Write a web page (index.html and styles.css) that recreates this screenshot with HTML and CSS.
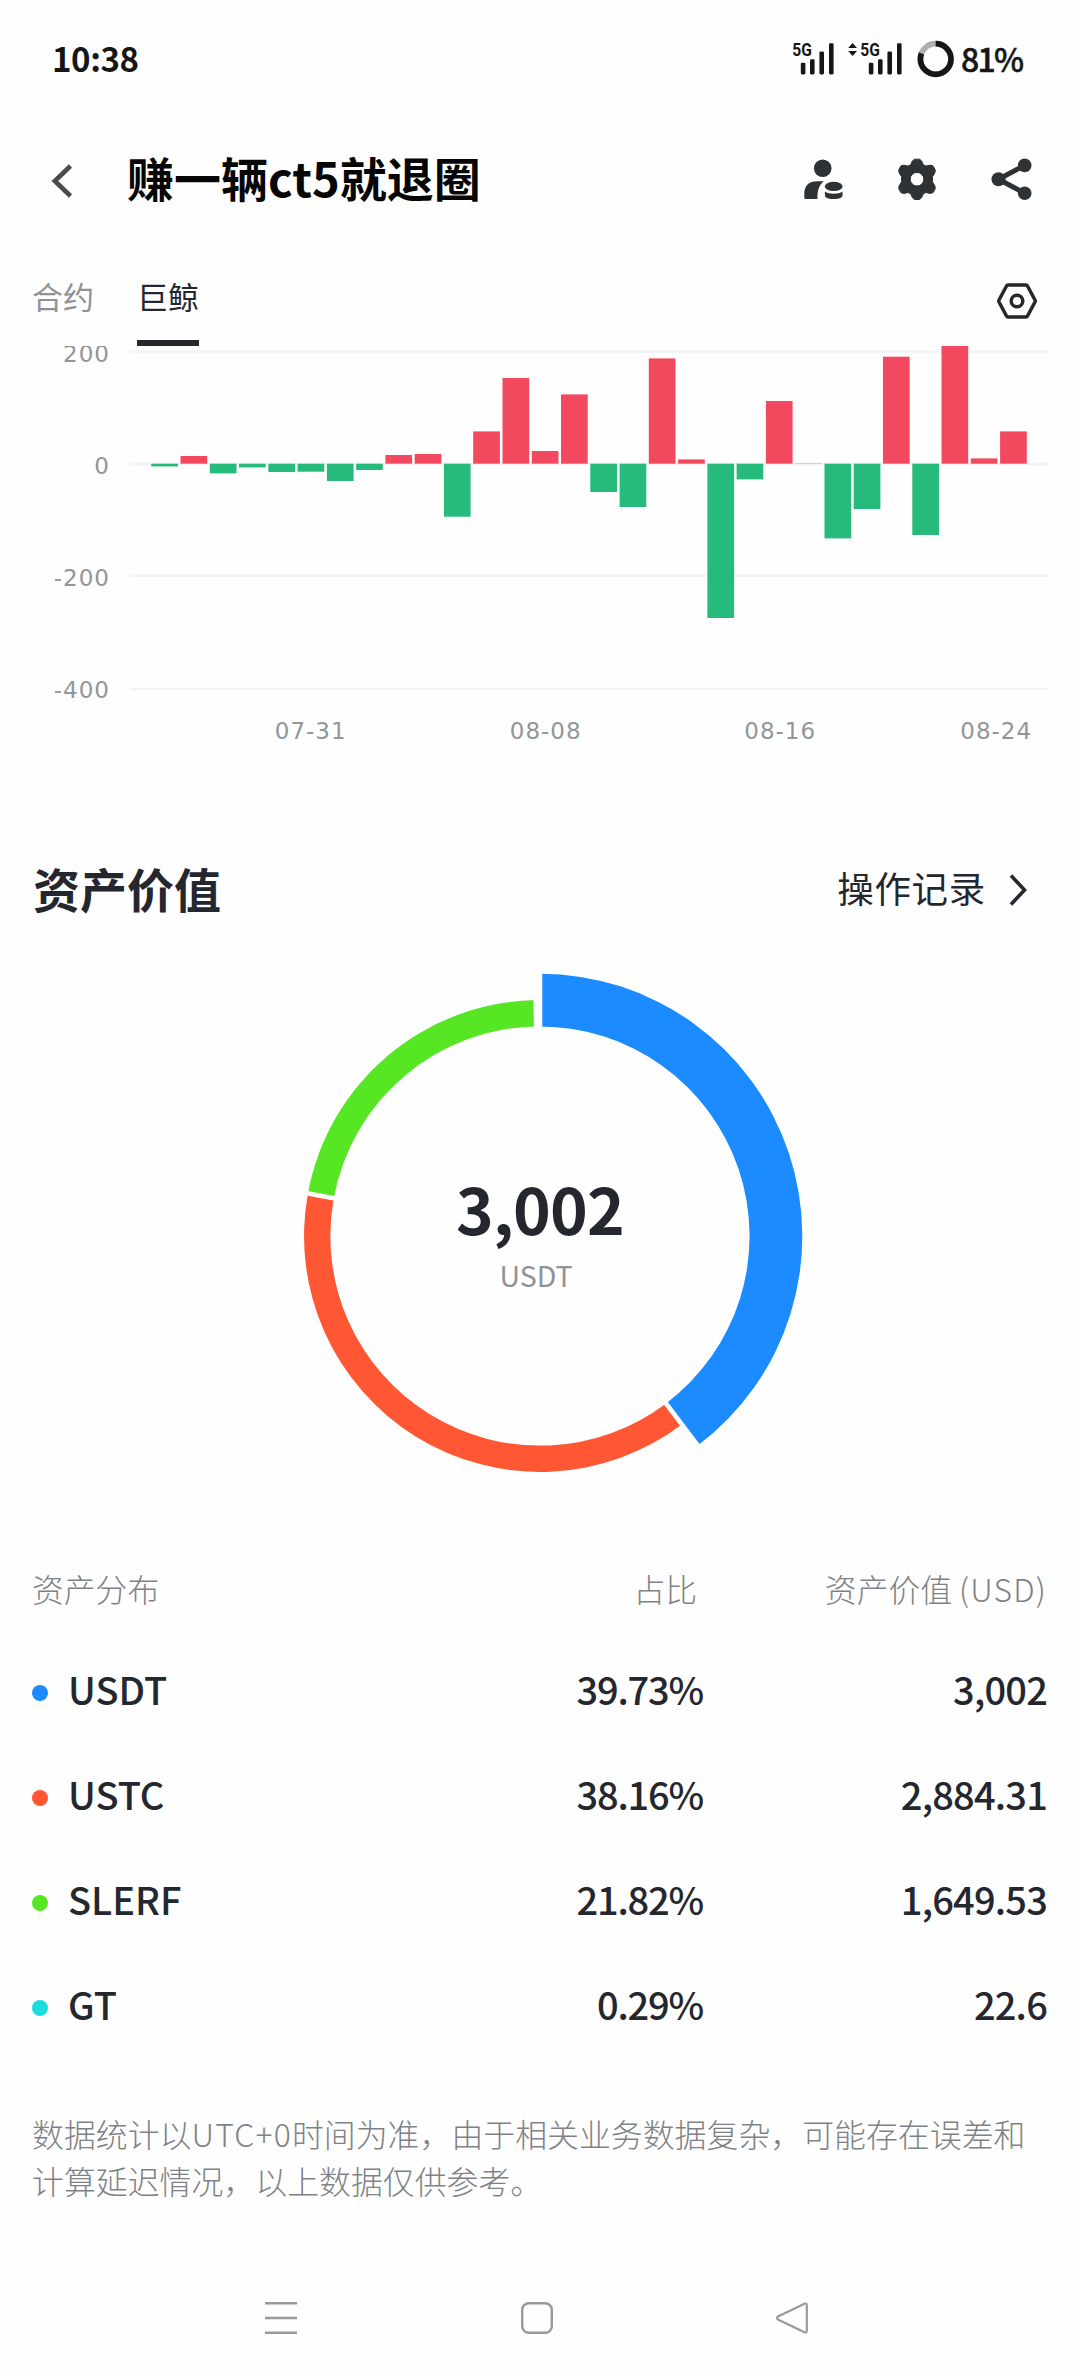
FILE: index.html
```html
<!DOCTYPE html>
<html lang="zh-CN">
<head>
<meta charset="utf-8">
<title>资产价值</title>
<link rel="stylesheet" href="styles.css">
</head>
<body>
<div class="status">
  <span class="time">10:38</span>
  <div class="status-right">
    <svg class="signals" width="166" height="40" viewBox="790 39 166 40">
      <g fill="#161616">
        <text class="net" x="792.3" y="56.4" textLength="19.6" lengthAdjust="spacingAndGlyphs">5G</text>
        <rect x="800.8" y="62.8" width="4.6" height="11.6" rx="1.3"/>
        <rect x="810" y="59.3" width="4.6" height="15.1" rx="1.3"/>
        <rect x="819.4" y="51.5" width="4.6" height="22.9" rx="1.3"/>
        <rect x="829" y="43.3" width="4.6" height="31.1" rx="1.3"/>
      </g>
      <g fill="#161616" transform="translate(68 0)">
        <text class="net" x="792.3" y="56.4" textLength="19.6" lengthAdjust="spacingAndGlyphs">5G</text>
        <rect x="800.8" y="62.8" width="4.6" height="11.6" rx="1.3"/>
        <rect x="810" y="59.3" width="4.6" height="15.1" rx="1.3"/>
        <rect x="819.4" y="51.5" width="4.6" height="22.9" rx="1.3"/>
        <rect x="829" y="43.3" width="4.6" height="31.1" rx="1.3"/>
      </g>
      <path d="M848.2 48 852.6 43l4.4 5zM848.2 51h8.8l-4.4 5z" fill="#161616"/>
      <circle cx="935.7" cy="59" r="15.3" fill="none" stroke="#b0b0b0" stroke-width="5.7"/>
      <circle cx="935.7" cy="59" r="15.3" fill="none" stroke="#161616" stroke-width="5.7" pathLength="100" stroke-dasharray="81 100" transform="rotate(-90 935.7 59)"/>
    </svg>
    <span class="battery">81%</span>
  </div>
</div>

<header class="header">
  <svg class="back" width="30" height="44" viewBox="48 158 30 44"><path d="M70.5 166 54.8 181l15.7 15" fill="none" stroke="#4a4b50" stroke-width="4.6"/></svg>
  <h1>赚一辆ct5就退圈</h1>
  <svg class="actions" width="240" height="50" viewBox="800 154 240 50" fill="#2e3235">
    <circle cx="822.7" cy="168.3" r="8.8"/>
    <path d="M804.3 197.5v-3.5c0-8.5 4.500-12.800 13-12.800h6.500c-4.500 3.500-6.700 9.500-6.300 17.800h-11.700q-1.500 0-1.500-1.500z"/>
    <ellipse cx="833.7" cy="186.400" rx="8.900" ry="4.600"/>
    <path d="M824.9 191.600c4 3 13.600 3 17.600 0v3.600c0 5.200-17.600 5.200-17.600 0z"/>
    <path fill-rule="evenodd" stroke="#2e3235" stroke-width="1" stroke-linejoin="round" d="M914.500 159.200h5l2.200 1.800 1.400 3.600 2.800 1.500 4.100-.9 3 .6 2.300 4.200-.5 3-2.300 3.700v5.200l2.300 3.700.5 3-2.300 4.100-3 .7-4.100-.9-2.800 1.500-1.400 3.600-2.200 1.900h-5l-2.200-1.900-1.400-3.600-2.800-1.500-4.100.9-3-.7-2.300-4.100.5-3 2.400-3.700v-5.200l-2.400-3.700-.5-3 2.300-4.200 3-.6 4.100.9 2.800-1.500 1.400-3.600zM917 172.400a6.800 6.800 0 1 0 0 13.600 6.800 6.800 0 1 0 0-13.600z"/>
    <circle cx="998.500" cy="179.200" r="7"/><circle cx="1024.700" cy="165.400" r="6.800"/><circle cx="1024.700" cy="193.300" r="6.800"/>
    <path d="M1024.700 165.400 998.500 179.200l26.200 14.100" fill="none" stroke="#2e3235" stroke-width="5"/>
  </svg>
</header>

<nav class="tabs">
  <span class="tab">合约</span>
  <span class="tab active">巨鲸</span>
  <svg class="hex" width="44" height="40" viewBox="995 281 44 40" fill="none" stroke="#25272a" stroke-width="3.500" stroke-linejoin="round">
    <path d="M1008 285h18q1 0 1.500 1l7.500 14q.5 1 0 2l-7.500 14q-.5 1-1.500 1h-18q-1 0-1.500-1l-7.500-14q-.5-1 0-2l7.500-14q.5-1 1.500-1z"/>
    <circle cx="1017" cy="301" r="5.800"/>
  </svg>
</nav>

<svg class="chart" width="1080" height="414" viewBox="0 346 1080 414">
  <g fill="#f1f3f5">
    <rect x="130" y="350.500" width="918" height="2.400"/>
    <rect x="130" y="462.500" width="918" height="3"/>
    <rect x="130" y="574.600" width="918" height="2.400"/>
    <rect x="130" y="688" width="918" height="2"/>
  </g>
  <g fill="#26ba7b">
    <rect x="151.200" y="463.700" width="26.700" height="2.700"/>
    <rect x="209.800" y="463.700" width="26.700" height="9.700"/>
    <rect x="239" y="463.700" width="26.700" height="3.700"/>
    <rect x="268.300" y="463.700" width="26.700" height="8.300"/>
    <rect x="297.600" y="463.700" width="26.700" height="8"/>
    <rect x="326.900" y="463.700" width="26.700" height="17.300"/>
    <rect x="356.100" y="463.700" width="26.700" height="6.300"/>
    <rect x="443.900" y="463.700" width="26.700" height="53"/>
    <rect x="590.300" y="463.700" width="26.700" height="28.300"/>
    <rect x="619.600" y="463.700" width="26.700" height="43.300"/>
    <rect x="707.400" y="463.700" width="26.700" height="154.300"/>
    <rect x="736.600" y="463.700" width="26.700" height="15.700"/>
    <rect x="795.200" y="463.700" width="26.700" height="0.300"/>
    <rect x="824.500" y="463.700" width="26.700" height="74.700"/>
    <rect x="853.700" y="463.700" width="26.700" height="45.300"/>
    <rect x="912.300" y="463.700" width="26.700" height="71.300"/>
  </g>
  <g fill="#f2495e">
    <rect x="180.500" y="456" width="26.700" height="7.700"/>
    <rect x="385.400" y="455" width="26.700" height="8.700"/>
    <rect x="414.700" y="454" width="26.700" height="9.700"/>
    <rect x="473.200" y="431.400" width="26.700" height="32.300"/>
    <rect x="502.500" y="378" width="26.700" height="85.700"/>
    <rect x="531.800" y="451" width="26.700" height="12.700"/>
    <rect x="561" y="394.400" width="26.700" height="69.300"/>
    <rect x="648.800" y="358.400" width="26.700" height="105.300"/>
    <rect x="678.100" y="459.400" width="26.700" height="4.300"/>
    <rect x="765.900" y="401" width="26.700" height="62.700"/>
    <rect x="883" y="356.700" width="26.700" height="107"/>
    <rect x="941.500" y="346" width="26.700" height="117.700"/>
    <rect x="970.800" y="458.400" width="26.700" height="5.300"/>
    <rect x="1000.100" y="431.400" width="26.700" height="32.300"/>
  </g>
  <g class="axis" text-anchor="end">
    <text x="110" y="362">200</text>
    <text x="110" y="474">0</text>
    <text x="110" y="586">-200</text>
    <text x="110" y="698">-400</text>
  </g>
  <g class="axis" text-anchor="middle">
    <text x="310.700" y="739">07-31</text>
    <text x="545.700" y="739">08-08</text>
    <text x="780.200" y="739">08-16</text>
    <text x="996.200" y="739">08-24</text>
  </g>
</svg>

<section class="assets-head">
  <h2>资产价值</h2>
  <div class="records">操作记录
    <svg width="22" height="36" viewBox="0 0 22 36"><path d="M3 3.500 16.500 18 3 32.500" fill="none" stroke="#25272e" stroke-width="3.600"/></svg>
  </div>
</section>

<section class="donut-wrap">
  <svg class="donut" width="540" height="540" viewBox="-270 -270 540 540">
    <path fill="#1b8bff" d="M0-262.300A262.300 262.300 0 0 1 157.700 209.600L126.100 167.400A209.600 209.600 0 0 0 0-209.600z"/>
    <path fill="#ff5733" d="M141.900 188.500A236 236 0 0 1-232.100-42.600L-206.200-37.900A209.600 209.600 0 0 0 126.100 167.400z"/>
    <path fill="#56e624" d="M-232.100-42.600A236 236 0 0 1-4.300-236L-3.800-209.600A209.600 209.600 0 0 0-206.200-37.900z"/>
    <path stroke="#fefefe" stroke-width="4.600" d="M0-200V-270M120.300 159.800 162.400 215.700M-196.700-36.100-265.600-48.800M-3.600-200-4.900-270"/>
  </svg>
  <div class="donut-label">
    <strong>3,002</strong>
    <span>USDT</span>
  </div>
</section>

<section class="table">
  <div class="row head"><span>资产分布</span><span class="share">占比</span><span>资产价值 <span class="unit">(USD)</span></span></div>
  <div class="row"><span class="name"><i class="dot blue"></i>USDT</span><span class="pct">39.73%</span><span class="num">3,002</span></div>
  <div class="row"><span class="name"><i class="dot orange"></i>USTC</span><span class="pct">38.16%</span><span class="num">2,884.31</span></div>
  <div class="row"><span class="name"><i class="dot green"></i>SLERF</span><span class="pct">21.82%</span><span class="num">1,649.53</span></div>
  <div class="row"><span class="name"><i class="dot cyan"></i>GT</span><span class="pct">0.29%</span><span class="num">22.6</span></div>
</section>

<p class="note">数据统计以<span class="unit">UTC+0</span>时间为准，由于相关业务数据复杂，可能存在误差和<br>计算延迟情况，以上数据仅供参考。</p>

<footer class="sysnav">
  <svg width="36" height="36" viewBox="0 0 36 36"><path d="M2 3.300h32M2 18h32M2 32.700h32" stroke="#999" stroke-width="2.600"/></svg>
  <svg width="36" height="36" viewBox="0 0 36 36"><rect x="3.200" y="3.200" width="29.600" height="29.600" rx="6.500" fill="none" stroke="#999" stroke-width="2.400"/></svg>
  <svg width="36" height="36" viewBox="0 0 36 36"><path d="M30.500 3.800 4 16.500q-2 1.500 0 3L30.500 32.200q2.300 1 2.300-1.500V5.300q0-2.500-2.300-1.500z" fill="none" stroke="#999" stroke-width="2.200"/></svg>
</footer>
</body>
</html>
```
FILE: styles.css
```css
* { box-sizing: border-box; }
body {
  margin: 0;
  width: 1080px;
  height: 2376px;
  display: flex;
  flex-direction: column;
  background: #fefefe;
  color: #25272e;
  font-family: "Noto Sans CJK SC", "Noto Sans", sans-serif;
  overflow: hidden;
}
body > * { flex-shrink: 0; }
svg { display: block; }
h1, h2, p { margin: 0; }

.status {
  height: 113px;
  padding: 0 60px 0 52px;
  display: flex;
  justify-content: space-between;
  align-items: center;
  color: #161616;
}
.time { font: 700 33px/40px "Noto Sans CJK SC", sans-serif; letter-spacing: -.4px; padding-top: 2px; }
.status-right { display: flex; align-items: center; gap: 5px; padding-top: 5px; }
.battery {
  width: 59px;
  margin-top: -3px;
  font: 500 32px/40px "Noto Sans CJK SC", sans-serif;
  letter-spacing: -1.8px;
  white-space: nowrap;
  -webkit-text-stroke: .5px #161616;
}
.net { font: 700 18px "Roboto", sans-serif; }

.header {
  height: 128px;
  padding: 0 40px 0 48px;
  display: flex;
  align-items: center;
}
.back { margin-top: 6px; }
.header h1 {
  flex: 1;
  margin-left: 49px;
  font-size: 47px;
  line-height: 60px;
  font-weight: 700;
  color: #060606;
}
.actions { margin-top: 4px; }

.tabs {
  height: 105px;
  padding: 0 41px 0 32px;
  display: flex;
  gap: 43px;
}
.tab {
  height: 105px;
  padding-top: 35px;
  font-size: 31px;
  line-height: 40px;
  color: #8f9194;
}
.tab.active { color: #25272e; border-bottom: 6px solid #25272e; }
.hex { margin: 40px 0 0 auto; }

.axis { font: 23px "DejaVu Sans", sans-serif; letter-spacing: 1px; fill: #929699; }

.assets-head {
  height: 206px;
  padding: 88px 50px 0 33px;
  display: flex;
  justify-content: space-between;
  align-items: flex-start;
}
.assets-head h2 { font-size: 47px; line-height: 80px; font-weight: 700; }
.records {
  display: flex;
  align-items: center;
  gap: 22px;
  font-size: 36.500px;
  line-height: 80px;
  letter-spacing: .7px;
}
.records svg { margin-top: 3px; }

.donut-wrap { height: 592px; display: grid; justify-content: center; align-items: start; }
.donut { grid-area: 1 / 1; }
.donut-label {
  grid-area: 1 / 1;
  padding-top: 201px;
  display: flex;
  flex-direction: column;
  align-items: center;
}
.donut-label strong { font-size: 64px; line-height: 80px; letter-spacing: -.8px; }
.donut-label span { font-size: 28.500px; line-height: 40px; color: #8f9398; margin: 8px 8px 0 0; }

.table { padding: 0 33px 0 32px; }
.row {
  display: grid;
  grid-template-columns: 371px 300px 344px;
  align-items: center;
  height: 105px;
  font-size: 38px;
  font-weight: 500;
}
.row > :nth-child(n+2) { text-align: right; }
.row.head {
  height: 60px;
  margin-bottom: 18px;
  font-size: 31.800px;
  font-weight: 300;
  color: #7e8286;
}
.unit { letter-spacing: 1.2px; }
.share { padding-right: 6px; }
.name { display: flex; align-items: center; gap: 20px; }
.pct { letter-spacing: -1.2px; }
.num { letter-spacing: -.8px; }
.dot { width: 16px; height: 16px; border-radius: 50%; margin-top: 8px; }
.blue { background: #1b8bff; }
.orange { background: #ff5733; }
.green { background: #56e624; }
.cyan { background: #1bdcdc; }

.note {
  padding: 54px 32px 0;
  height: 204px;
  font-size: 31.900px;
  line-height: 47px;
  font-weight: 300;
  color: #7e8286;
  white-space: nowrap;
}
.sysnav {
  height: 116px;
  padding: 0 270px 0 263px;
  display: flex;
  justify-content: space-between;
  align-items: center;
}
```
